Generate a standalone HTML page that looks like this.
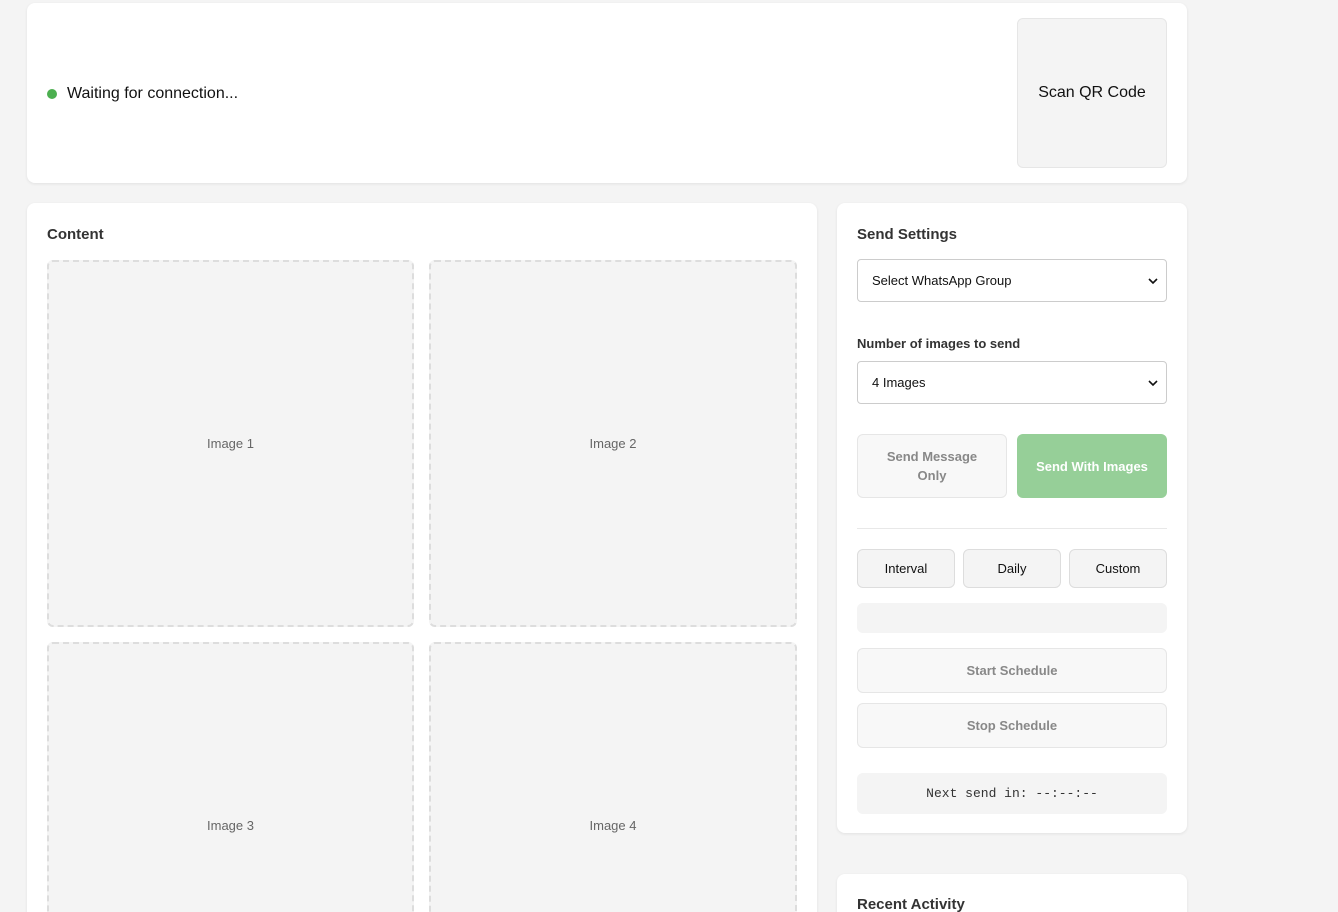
<!DOCTYPE html>
<html><head><style>
*{box-sizing:border-box;margin:0;padding:0}
html,body{width:1338px;height:912px;overflow:hidden}
body{background:#f4f4f4;font-family:"Liberation Sans",sans-serif;color:#222;position:relative}
.card{position:absolute;background:#fff;border-radius:8px;box-shadow:0 1px 3px rgba(0,0,0,.08)}
.abs{position:absolute}
.img{position:absolute;background:#f4f4f4;border:2px dashed #ddd;border-radius:6px;display:flex;align-items:center;justify-content:center;font-size:13px;color:#666}
.sel{position:absolute;left:20px;width:310px;height:43px;border:1px solid #ccc;border-radius:4px;font-size:13px;padding:0 8px 0 14px;display:flex;align-items:center;justify-content:space-between;color:#111}
.btn{position:absolute;border-radius:6px;display:flex;align-items:center;justify-content:center;text-align:center;font-size:13px}
.tab{top:346px;width:98px;height:39px;background:#f4f4f4;border:1px solid #ddd;color:#111}
.wide{left:20px;width:310px;height:45px;background:#f8f8f8;border:1px solid #e6e6e6;color:#888}
h3{position:absolute;font-size:15px;font-weight:bold;color:#333}
</style></head><body>
<div class="card" style="left:27px;top:3px;width:1160px;height:180px">
 <div class="abs" style="left:20px;top:86px;width:10px;height:10px;border-radius:50%;background:#4caf50"></div>
 <div class="abs" style="left:40px;top:82px;font-size:16px;color:#111">Waiting for connection...</div>
 <div class="btn" style="left:990px;top:15px;width:150px;height:150px;background:#f4f4f4;border:1px solid #e6e6e6;font-size:16px;color:#111">Scan QR Code</div>
</div>
<div class="card" style="left:27px;top:203px;width:790px;height:900px">
 <h3 style="left:20px;top:23px">Content</h3>
 <div class="img" style="left:20px;top:57px;width:367px;height:367px">Image 1</div>
 <div class="img" style="left:402px;top:57px;width:368px;height:367px">Image 2</div>
 <div class="img" style="left:20px;top:439px;width:367px;height:367px">Image 3</div>
 <div class="img" style="left:402px;top:439px;width:368px;height:367px">Image 4</div>
</div>
<div class="card" style="left:837px;top:203px;width:350px;height:630px">
 <h3 style="left:20px;top:23px">Send Settings</h3>
 <div class="sel" style="top:56px">Select WhatsApp Group<svg width="10" height="8" viewBox="0 0 10 8"><path d="M1 2l4 4 4-4" fill="none" stroke="#111" stroke-width="1.6"/></svg></div>
 <div class="abs" style="left:20px;top:133px;font-size:13px;font-weight:bold;color:#333">Number of images to send</div>
 <div class="sel" style="top:158px">4 Images<svg width="10" height="8" viewBox="0 0 10 8"><path d="M1 2l4 4 4-4" fill="none" stroke="#111" stroke-width="1.6"/></svg></div>
 <div class="btn" style="left:20px;top:231px;width:150px;height:64px;background:#f8f8f8;border:1px solid #e6e6e6;color:#888;font-weight:bold;line-height:19px">Send Message<br>Only</div>
 <div class="btn" style="left:180px;top:231px;width:150px;height:64px;background:#96cf98;color:#fff;font-weight:bold">Send With Images</div>
 <div class="abs" style="left:20px;top:325px;width:310px;height:1px;background:#e8e8e8"></div>
 <div class="btn tab" style="left:20px">Interval</div>
 <div class="btn tab" style="left:126px">Daily</div>
 <div class="btn tab" style="left:232px">Custom</div>
 <div class="abs" style="left:20px;top:400px;width:310px;height:30px;background:#f4f4f4;border-radius:6px"></div>
 <div class="btn wide" style="top:445px;font-weight:bold">Start Schedule</div>
 <div class="btn wide" style="top:500px;font-weight:bold">Stop Schedule</div>
 <div class="btn" style="left:20px;top:570px;width:310px;height:41px;background:#f4f4f4;font-family:'Liberation Mono',monospace;color:#333">Next send in: --:--:--</div>
</div>
<div class="card" style="left:837px;top:874px;width:350px;height:80px">
 <h3 style="left:20px;top:22px">Recent Activity</h3>
</div>
</body></html>
